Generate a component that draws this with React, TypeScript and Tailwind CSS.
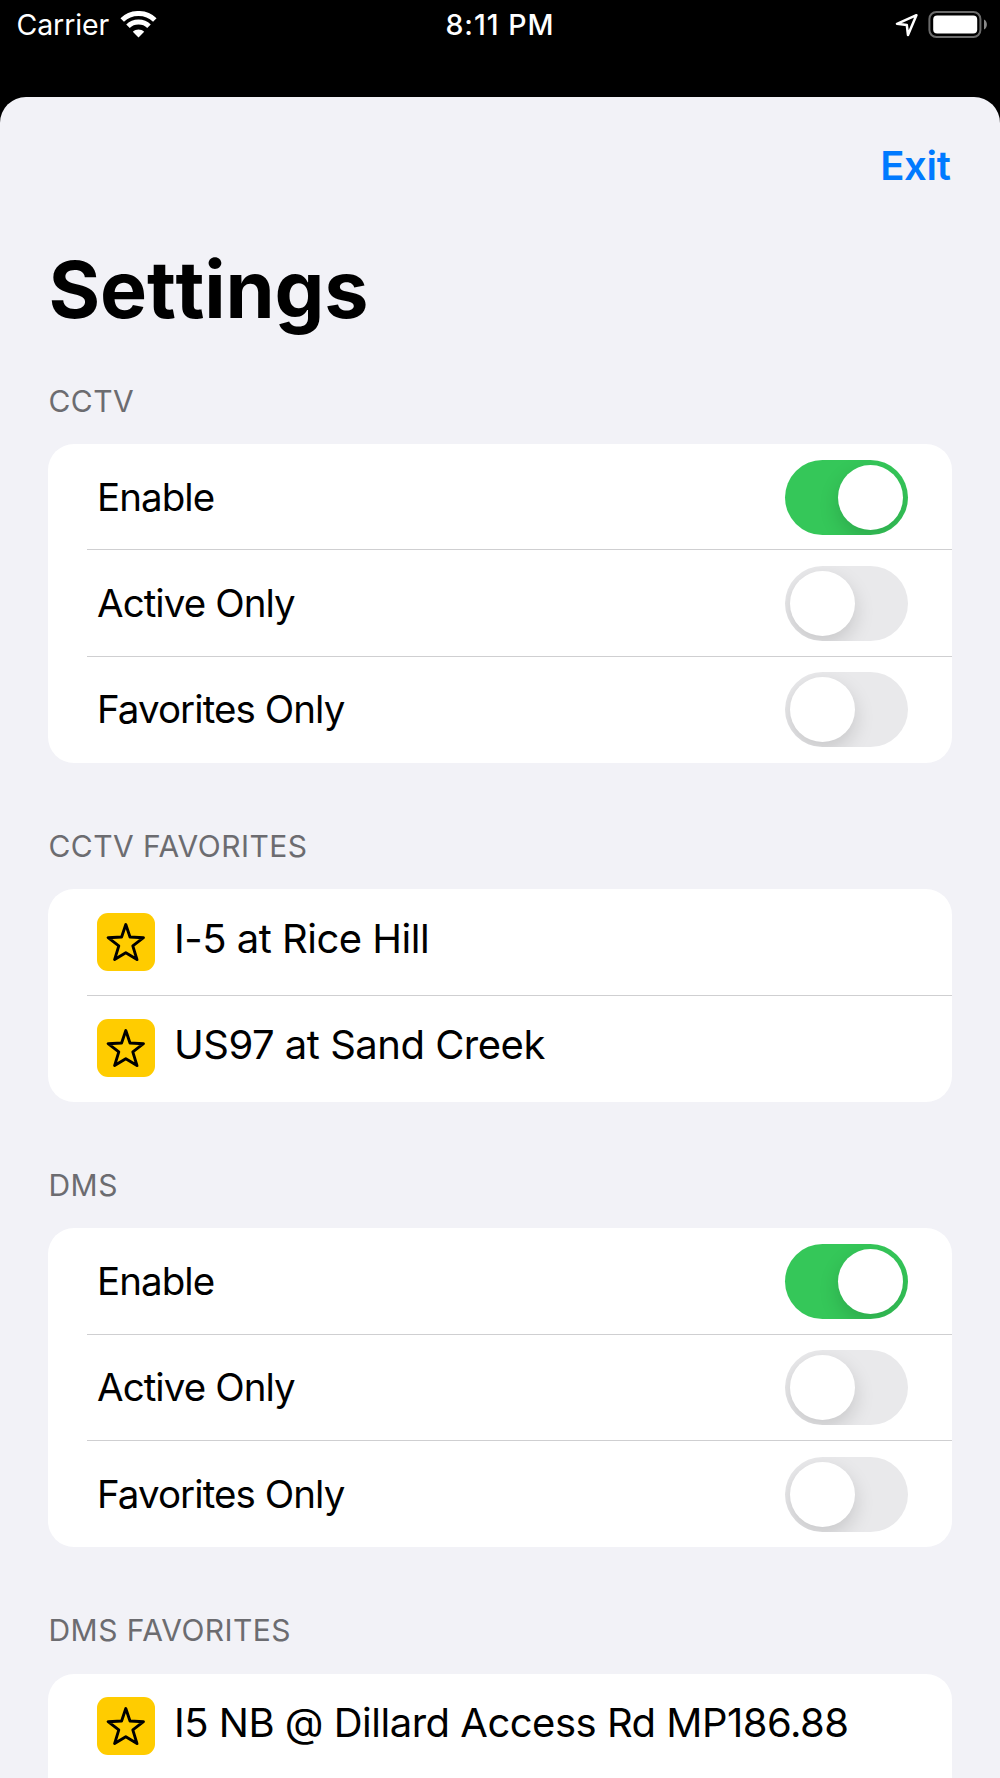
import React, { useState } from 'react';

interface ToggleSetting {
    label: string;
    enabled: boolean;
}

const initialSettings: ToggleSetting[] = [
    { label: 'Enable', enabled: true },
    { label: 'Active Only', enabled: false },
    { label: 'Favorites Only', enabled: false },
];

const StatusBar: React.FC = () => (
    <div className="grid h-[50px] grid-cols-3 items-center px-3 text-white">
        <div className="flex items-center gap-[11px] pl-[4.5px]">
            <span className="pt-px text-[28.5px] leading-none tracking-[-0.1px]">Carrier</span>
            <svg className="h-[28px] w-[37px]" viewBox="0 0 37 28" fill="none">
                <path d="M2.2 9C11 0.3 26 0.3 34.8 9" stroke="white" strokeWidth="5" />
                <path d="M8 15.2C13.6 9.6 23.4 9.6 29 15.2" stroke="white" strokeWidth="5" />
                <path d="M18.5 26.5L12.8 20.8C16 17.6 21 17.6 24.2 20.8Z" fill="white" />
            </svg>
        </div>
        <span className="pt-px text-center text-[28.5px] font-medium leading-none tracking-[1px]">8:11 PM</span>
        <div className="flex items-center justify-end gap-[10px]">
            <svg className="h-[24px] w-[24px]" viewBox="0 0 24 24" fill="none">
                <path d="M22.4 2.2L3 10.8L12.8 12L14 22Z" stroke="white" strokeWidth="2.5" strokeLinejoin="round" />
            </svg>
            <svg className="h-[28px] w-[60px]" viewBox="0 0 60 28">
                <rect x="1.4" y="1" width="51" height="25" rx="7" fill="none" stroke="#6b6b6b" strokeWidth="2" />
                <rect x="5.2" y="4.5" width="44" height="18" rx="4" fill="white" />
                <path d="M56 8.5C59.8 10 59.8 17 56 18.5Z" fill="#8a8a8a" />
            </svg>
        </div>
    </div>
);

interface SwitchProps {
    checked: boolean;
    label: string;
    onChange: () => void;
}

const Switch: React.FC<SwitchProps> = ({ checked, label, onChange }) => (
    <button
        type="button"
        role="switch"
        aria-checked={checked}
        aria-label={label}
        onClick={onChange}
        className={`flex h-[75px] w-[123px] items-center overflow-hidden rounded-full px-[5px] ${
            checked ? 'justify-end bg-[#35c759]' : 'justify-start bg-[#e9e9eb]'
        }`}
    >
        <span className="size-[65px] rounded-full bg-white shadow-[0_8px_20px_rgba(0,0,0,0.15)]" />
    </button>
);

interface SectionProps {
    title: string;
    children: React.ReactNode;
}

// The last card runs off the bottom of the screen, so it keeps square bottom corners
const Section: React.FC<SectionProps> = ({ title, children }) => (
    <section className="group/section mb-[65px] last:mb-0">
        <h2 className="h-[61.5px] pl-[0.5px] text-[30px] leading-[37px] tracking-[0.45px] text-[#6c6c70]">{title}</h2>
        <div className="overflow-hidden rounded-[26px] bg-white group-last/section:rounded-b-none">{children}</div>
    </section>
);

// The divider starts left of the label and runs to the card's right edge
const Row: React.FC<{ children: React.ReactNode }> = ({ children }) => (
    <div className="group pl-[39px]">
        <div className="flex h-[106.25px] items-center border-b border-[#cfcfd1] pl-[10px] pr-[44px] group-last:border-transparent">
            {children}
        </div>
    </div>
);

const ToggleSection: React.FC<{ title: string }> = ({ title }) => {
    const [settings, setSettings] = useState<ToggleSetting[]>(initialSettings);

    const handleToggle = (index: number) => {
        setSettings(settings.map((s, i) => (i === index ? { ...s, enabled: !s.enabled } : s)));
    };

    return (
        <Section title={title}>
            {settings.map((setting, index) => (
                <Row key={setting.label}>
                    <span className="flex-1 pt-px text-[38.5px] leading-none tracking-[-0.93px]">{setting.label}</span>
                    <div className="pt-[1.5px]">
                        <Switch checked={setting.enabled} label={setting.label} onChange={() => handleToggle(index)} />
                    </div>
                </Row>
            ))}
        </Section>
    );
};

const StarBadge: React.FC = () => (
    <svg className="size-[58px] shrink-0 rounded-[11px] bg-[#ffcc00]" viewBox="0 0 58 58" fill="none">
        <path
            d="M28.8 11.5L33 24L46.5 24.7L35.8 32.8L40 46.6L28.8 39.8L17.6 46.6L21.8 32.8L11.1 24.7L24.6 24Z"
            stroke="black"
            strokeWidth="2.9"
            strokeLinejoin="round"
        />
    </svg>
);

const FavoritesSection: React.FC<{ title: string; items: string[] }> = ({ title, items }) => (
    <Section title={title}>
        {items.map((item) => (
            <Row key={item}>
                <StarBadge />
                <span className="ml-[19px] whitespace-nowrap pb-[6px] text-[40px] leading-none tracking-[-0.5px]">{item}</span>
            </Row>
        ))}
    </Section>
);

const App: React.FC = () => (
    <div className="h-[1778px] overflow-hidden bg-black font-['Inter',sans-serif] text-black">
        <StatusBar />
        <main className="mt-[47px] rounded-t-[26px] bg-[#f2f2f7] pl-12 pr-[48.5px]">
            <div className="flex h-[137px] items-center justify-end pr-px">
                <button type="button" className="text-[40px] font-semibold leading-none tracking-[-0.3px] text-[#007aff]">
                    Exit
                </button>
            </div>
            <h1 className="h-[148.5px] pl-[0.5px] pt-[7px] text-[79px] font-bold leading-[97px] tracking-[-0.2px] [font-kerning:none]">
                Settings
            </h1>
            <ToggleSection title="CCTV" />
            <FavoritesSection title="CCTV FAVORITES" items={['I-5 at Rice Hill', 'US97 at Sand Creek']} />
            <ToggleSection title="DMS" />
            <FavoritesSection title="DMS FAVORITES" items={['I5 NB @ Dillard Access Rd MP186.88']} />
        </main>
    </div>
);

export default App;
